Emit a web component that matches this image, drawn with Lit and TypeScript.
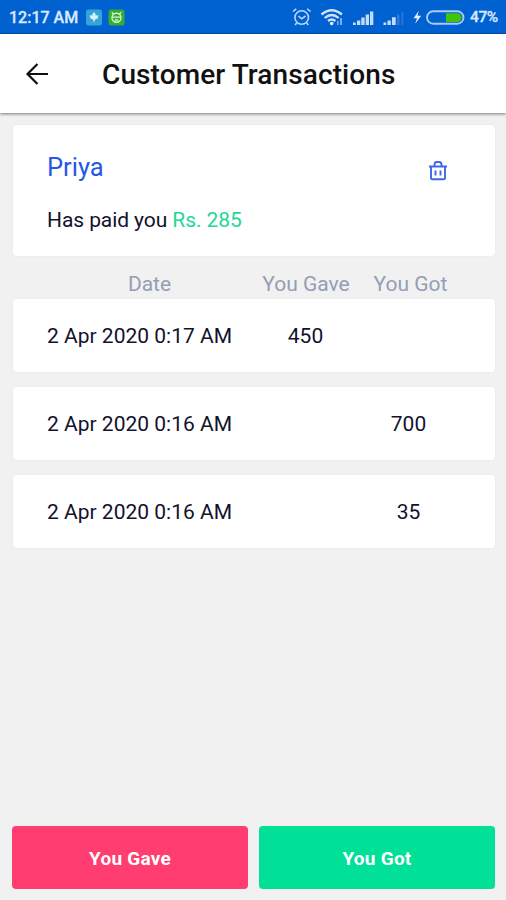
import { LitElement, html, css } from "lit";
import { customElement, property } from "lit/decorators.js";

interface Entry {
  date: string;
  gave?: string;
  got?: string;
}

@customElement("status-bar")
class StatusBar extends LitElement {
  static styles = css`
    :host {
      display: block;
      height: 34px;
      box-sizing: border-box;
      background: #0061d0;
      border-bottom: 1px solid #0a50b8;
      color: #dbe9ff;
      font: 500 16px/35px Roboto, sans-serif;
    }
    .bar { display: flex; height: 33px; }
    .time { margin-left: 9px; width: 76px; white-space: nowrap; letter-spacing: 0; -webkit-text-stroke: 0.3px; }
    .percent { width: 36px; white-space: nowrap; font-size: 15.5px; letter-spacing: -0.4px; -webkit-text-stroke: 0.3px; }
    .apps { width: 42px; height: 33px; }
    .signals { margin-left: auto; width: 180px; height: 33px; }
  `;
  render() {
    return html`<div class="bar">
      <span class="time">12:17 AM</span>
      <svg class="apps" viewBox="85 0 42 33">
        <rect x="86" y="9.5" width="16" height="16" rx="2.5" fill="#35a5d8" />
        <path d="M94 12l2 2.800-1.200 0.500 3.700 0.200-1 3-2.500 1-1 3.200-1-3.200-2.500-1-1-3 3.700-0.200-1.200-0.500z" fill="#d8f2ff" />
        <rect x="108.5" y="9.5" width="16" height="16" rx="2.5" fill="#35ad32" />
        <path d="M111.800 12.200l1.900 2.200M121.200 12.200l-1.900 2.200" stroke="#d9f7d3" stroke-width="1.3" />
        <circle cx="116.5" cy="17.8" r="4.500" fill="none" stroke="#d9f7d3" stroke-width="1.4" />
        <path d="M112.500 17.200h8M114.800 20h3.400" stroke="#d9f7d3" stroke-width="1.3" />
      </svg>
      <svg class="signals" viewBox="290 0 180 33">
        <g fill="none" stroke="#bcd8ff" stroke-width="1.6">
          <circle cx="301.7" cy="17.5" r="6.8" />
          <path d="M298.500 16l3.200 2.800 3.800-2.800M293 11.500l3.300-2.700M310.500 11.500l-3.300-2.700M296.700 23l-1.600 2M306.700 23l1.600 2" />
        </g>
        <g fill="none" stroke="#cfe2ff" stroke-width="2.3">
          <path d="M321.500 14.500q10.200-8.500 20.400 0M324.700 18q7-6 14 0M328 21q3.700-3 7.400 0" />
          <path d="M341 18v7" stroke="#79aef0" stroke-width="2" />
          <path d="M337.800 21v4" stroke="#79aef0" stroke-width="1.5" />
        </g>
        <circle cx="331.7" cy="23.5" r="1.8" fill="#e4efff" />
        <g fill="#c5dcff">
          <path d="M353 22.500h2.700v2.500h-2.700zM357 20.500h3.300v4.500h-3.300zM361.300 17.500h3.300v7.500h-3.300zM365.700 14.500h3.300v10.500h-3.300zM370 11.500h3.300v13.500h-3.300z" />
          <path d="M383.500 22.500h2.700v2.500h-2.700zM387.500 20.500h3.300v4.500h-3.300zM392 17.300h3.700v7.700h-3.700z" />
          <path d="M397 14.500h2.500v10.500h-2.500zM401.500 11.500h1.700v13.500h-1.700z" fill="#2f7ad8" />
          <path d="M418.800 10.800l-5.300 7.500h3.500l-1.800 5.500 6-8h-3.700z" fill="#e4efff" />
        </g>
        <rect x="427" y="11.300" width="36.5" height="12.4" rx="6.200" fill="none" stroke="#a9ccfa" stroke-width="1.900" />
        <path d="M446 13.200h11.200a4.300 4.300 0 0 1 0 8.700h-11.200z" fill="#43c30b" />
      </svg>
      <span class="percent">47%</span>
    </div>`;
  }
}

@customElement("transaction-row")
class TransactionRow extends LitElement {
  @property({ attribute: false }) entry!: Entry;
  static styles = css`
    :host {
      display: grid;
      grid-template-columns: 242px 102px 104px;
      align-items: center;
      box-sizing: border-box;
      height: 73.5px;
      padding-top: 1px;
      background: #fff;
      border-radius: 4px;
      box-shadow: 0 0 2px rgba(40, 60, 90, 0.08);
    }
    .date { padding-left: 34.5px; white-space: nowrap; }
    .amount { text-align: center; }
  `;
  render() {
    return html`<span class="date">${this.entry.date}</span>
      <span class="amount">${this.entry.gave ?? ""}</span>
      <span class="amount">${this.entry.got ?? ""}</span>`;
  }
}

@customElement("app-root")
class AppRoot extends LitElement {
  private entries: Entry[] = [
    { date: "2 Apr 2020 0:17 AM", gave: "450" },
    { date: "2 Apr 2020 0:16 AM", got: "700" },
    { date: "2 Apr 2020 0:16 AM", got: "35" },
  ];
  static styles = css`
    :host {
      display: flex;
      flex-direction: column;
      height: 900px;
      background: #f1f1f1;
      color: #12122b;
      font: 400 21px/28px Roboto, sans-serif;
    }
    .header {
      display: flex;
      align-items: center;
      height: 79px;
      background: #fff;
      box-shadow: 0 1px 3px rgba(0, 0, 0, 0.5);
      color: #111;
    }
    .back { width: 24px; height: 24px; margin-left: 25px; }
    .title { margin: 3px 0 0 53px; font-size: 28px; line-height: 36px; font-weight: 500; letter-spacing: 0.1px; }
    .content { flex: 1; padding: 12px 11.5px 0 12.5px; }
    .summary {
      display: flex;
      justify-content: space-between;
      box-sizing: border-box;
      height: 130.5px;
      padding: 25px 46px 0 34.5px;
      background: #fff;
      border-radius: 4px;
      box-shadow: 0 0 2px rgba(40, 60, 90, 0.08);
    }
    .name { font-size: 25.5px; line-height: 34px; color: #2558e8; }
    .paid { margin-top: 22px; line-height: 28px; letter-spacing: -0.08px; }
    .sum { color: #25d796; }
    .trash { width: 22px; height: 24px; margin-top: 9px; }
    .columns {
      display: grid;
      grid-template-columns: 242px 103px 106px;
      height: 43px;
      padding-top: 14.5px;
      box-sizing: border-box;
      color: #959db5;
      text-align: center;
    }
    .columns span:first-child { padding-left: 32px; }
    .list { display: flex; flex-direction: column; gap: 14.5px; }
    .actions { display: flex; gap: 11px; padding: 0 11px 11px 12px; }
    .action {
      flex: 1;
      height: 63px;
      border: 0;
      border-radius: 4px;
      color: #fff;
      font: 700 19px/24px Roboto, sans-serif;
      letter-spacing: 0.25px;
      padding: 2px 0 0;
    }
    .gave { background: #ff3d71; }
    .got { background: #00e096; }
  `;
  render() {
    return html`<status-bar></status-bar>
      <div class="header">
        <svg class="back" viewBox="0 0 24 24" fill="none" stroke="#111" stroke-width="2.2">
          <path d="M23 12H3M12.500 2L2.500 12l10 10" />
        </svg>
        <span class="title">Customer Transactions</span>
      </div>
      <div class="content">
        <div class="summary">
          <div>
            <div class="name">Priya</div>
            <div class="paid">Has paid you <span class="sum">Rs. 285</span></div>
          </div>
          <svg class="trash" viewBox="0 0 22 24" fill="none" stroke="#3f67ec" stroke-width="1.9">
            <path d="M2 7.500h18M4 7.500v11.500q0 1.300 1.300 1.300h11.400q1.300 0 1.300-1.300V7.500M7.500 7V5.500Q7.500 3 10 3h2Q14.500 3 14.500 5.500V7M8.500 11.500v5M13.500 11.500v5" />
          </svg>
        </div>
        <div class="columns"><span>Date</span><span>You Gave</span><span>You Got</span></div>
        <div class="list">
          ${this.entries.map((e) => html`<transaction-row .entry=${e}></transaction-row>`)}
        </div>
      </div>
      <div class="actions">
        <button class="action gave">You Gave</button>
        <button class="action got">You Got</button>
      </div>`;
  }
}
